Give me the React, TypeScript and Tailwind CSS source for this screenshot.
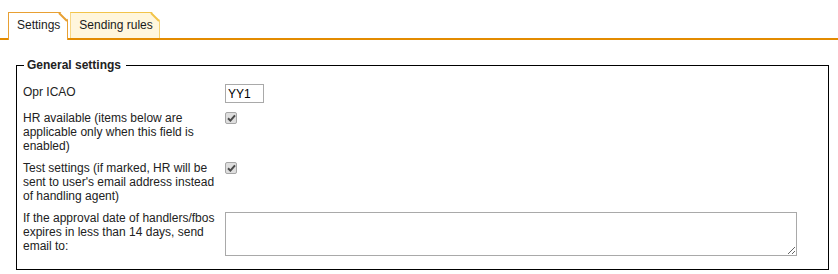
import React from 'react';

const CheckMark: React.FC = () => (
  <span className="mt-[1px] flex h-[12px] w-[12px] items-center justify-center rounded-[2px] border border-[#a6a6a6] bg-[#dedede]">
    <svg width="9" height="8" viewBox="0 0 9 8" aria-hidden="true">
      <path d="M1 4.2 L3.4 6.6 L8 1.4" fill="none" stroke="#4a4a4a" strokeWidth="2" />
    </svg>
  </span>
);

const App: React.FC = () => {
  return (
    <div className="min-h-[274px] bg-white font-['Liberation_Sans',Arial,sans-serif] text-[12px] leading-[14px] text-[#222]">
      {/* Tabs */}
      <div className="flex items-end border-b-2 border-[#e38b00] pl-[8px] pt-[12px]">
        <div
          className="relative -mb-[2px] border-x border-t border-[#e8a033] bg-white pb-[8px] pl-[8px] pr-[7px] pt-[5px] text-[#1a1a1a]"
          style={{ clipPath: 'polygon(0 0, calc(100% - 8px) 0, 100% 8px, 100% 100%, 0 100%)' }}
        >
          Settings
          <svg className="absolute right-0 top-0" width="9" height="9" viewBox="0 0 9 9" aria-hidden="true">
            <line x1="1" y1="0" x2="9" y2="8" stroke="#e8a033" strokeWidth="2" />
          </svg>
        </div>
        <div
          className="relative ml-[2px] border-x border-t border-[#f2c44a] bg-[#fff6dc] pb-[6px] pl-[8px] pr-[6px] pt-[5px] text-[#1a1a1a]"
          style={{ clipPath: 'polygon(0 0, calc(100% - 8px) 0, 100% 8px, 100% 100%, 0 100%)' }}
        >
          Sending rules
          <svg className="absolute right-0 top-0" width="9" height="9" viewBox="0 0 9 9" aria-hidden="true">
            <line x1="1" y1="0" x2="9" y2="8" stroke="#f2c44a" strokeWidth="2" />
          </svg>
        </div>
      </div>

      {/* General settings */}
      <fieldset className="ml-[16px] mr-[9px] mt-[18px] border border-black pb-[13px] pl-[6px] pr-[6px] pt-[12px]">
        <legend className="ml-[1px] pl-[3px] pr-[5px] font-bold leading-[14px]">General settings</legend>
        <div className="grid grid-cols-[196px_1fr] items-start gap-x-[6px] gap-y-[8px]">
          <div className="mt-[1px]">Opr ICAO</div>
          <div>
            <input
              type="text"
              defaultValue="YY1"
              className="h-[19px] w-[39px] border border-[#a9a9a9] bg-white px-[2px] text-[12px] text-black outline-none"
            />
          </div>

          <div>HR available (items below are applicable only when this field is enabled)</div>
          <div>
            <CheckMark />
          </div>

          <div>Test settings (if marked, HR will be sent to user's email address instead of handling agent)</div>
          <div>
            <CheckMark />
          </div>

          <div>If the approval date of handlers/fbos expires in less than 14 days, send email to:</div>
          <div>
            <textarea className="mt-[1px] block h-[44px] w-[572px] border border-[#a9a9a9] bg-white text-[12px] outline-none" />
          </div>
        </div>
      </fieldset>
    </div>
  );
};

export default App;
